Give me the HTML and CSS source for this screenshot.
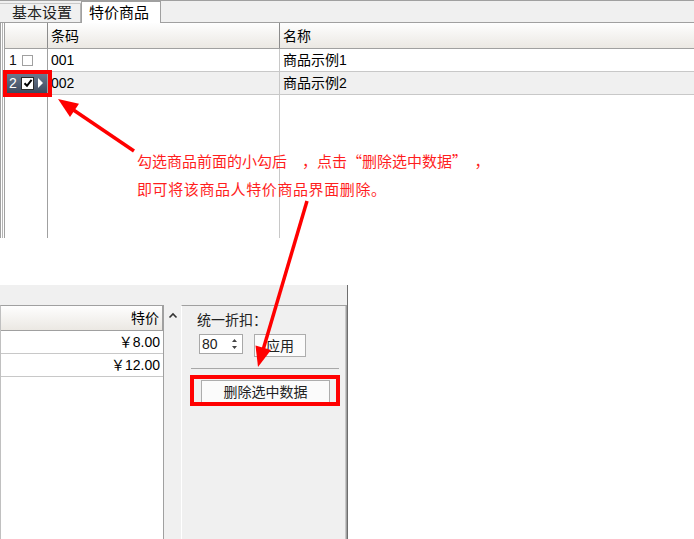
FILE: index.html
```html
<!DOCTYPE html>
<html lang="zh-CN">
<head>
    <meta charset="UTF-8">
    <meta name="viewport" content="width=device-width, initial-scale=1.0">
    <title>特价商品</title>
    <link rel="stylesheet" href="styles.css">
</head>
<body>
    <div class="page">
        <!-- upper screenshot: goods grid -->
        <div class="shot-top">
            <div class="tabs">
                <div class="tab">基本设置</div>
                <div class="tab tab-active">特价商品</div>
            </div>
            <div class="grid">
                <div class="row row-head">
                    <div class="cell rh"></div>
                    <div class="cell c1">条码</div>
                    <div class="cell c2">名称</div>
                </div>
                <div class="row">
                    <div class="cell rh"><span class="num">1</span><span class="cb"></span></div>
                    <div class="cell c1">001</div>
                    <div class="cell c2">商品示例1</div>
                </div>
                <div class="row row-sel">
                    <div class="cell rh rh-sel mark">
                        <span class="num">2</span>
                        <span class="cb cb-on">
                            <svg width="10" height="10" viewBox="0 0 10 10"><path d="M1.5 5.2 L4 7.8 L8.6 1.8" fill="none" stroke="#000" stroke-width="2"/></svg>
                        </span>
                        <span class="tri"></span>
                    </div>
                    <div class="cell c1">002</div>
                    <div class="cell c2">商品示例2</div>
                </div>
                <div class="row row-fill">
                    <div class="cell rh"></div>
                    <div class="cell c1"></div>
                    <div class="cell c2"></div>
                </div>
            </div>
        </div>

        <!-- lower screenshot: price grid and side panel -->
        <div class="shot-bottom">
            <div class="strip"></div>
            <div class="split">
                <div class="pgrid">
                    <div class="prow prow-head">特价</div>
                    <div class="prow">￥8.00</div>
                    <div class="prow">￥12.00</div>
                </div>
                <div class="vscroll">
                    <svg width="10" height="7" viewBox="0 0 10 7"><path d="M1.5 5.5 L5 2 L8.5 5.5" fill="none" stroke="#333" stroke-width="1.6"/></svg>
                </div>
                <div class="panel">
                    <div class="label">统一折扣：</div>
                    <div class="discount">
                        <div class="spin">
                            <span>80</span>
                            <svg width="7" height="14" viewBox="0 0 7 14"><path d="M1 5 L3.5 2 L6 5 Z M1 9 L3.5 12 L6 9 Z" fill="#444"/></svg>
                        </div>
                        <div class="btn btn-apply">应用</div>
                    </div>
                    <div class="sep"></div>
                    <div class="btn btn-del mark">删除选中数据</div>
                </div>
            </div>
        </div>

        <!-- annotations -->
        <div class="note">勾选商品前面的小勾后　，点击“删除选中数据”　，<br><span class="wide">即可将该商品人特价商品界面删除。</span></div>
        <svg class="arrows" width="694" height="539" viewBox="0 0 694 539">
            <line x1="134" y1="151" x2="72" y2="109" stroke="#f00" stroke-width="3.5"/>
            <polygon points="58,99 79,103.7 70,116.9" fill="#f00"/>
            <line x1="307" y1="201" x2="263" y2="350" stroke="#f00" stroke-width="3.5"/>
            <polygon points="258,367 271,350 255.5,345.5" fill="#f00"/>
        </svg>
    </div>
</body>
</html>
```

FILE: styles.css
```css
* {
    box-sizing: border-box;
}
body {
    margin: 0;
    background: #fff;
    color: #000;
    font-family: "Liberation Sans", "Noto Sans CJK SC", sans-serif;
    font-size: 14px;
}
.page {
    position: relative;
    width: 694px;
    height: 539px;
    overflow: hidden;
}

/* upper shot */
.shot-top {
    height: 238px;
    display: flex;
    flex-direction: column;
}
.tabs {
    height: 23px;
    display: flex;
    align-items: flex-end;
    background: #f0f0f0;
    border-top: 1px solid #a0a0a0;
    border-bottom: 1px solid #a0a0a0;
}
.tab {
    width: 81px;
    height: 19px;
    padding-left: 12px;
    display: flex;
    align-items: center;
    border-top: 1px solid #c8c8c8;
    border-right: 1px solid #b4b4b4;
    font-size: 15px;
    line-height: 18px;
    color: #222;
}
.tab-active {
    width: 80px;
    height: 22px;
    margin-bottom: -1px;
    padding-left: 7px;
    background: #fff;
    border: 1px solid #a0a0a0;
    border-bottom: 0;
    color: #000;
}
.grid {
    flex: 1;
    display: flex;
    flex-direction: column;
    padding-left: 5px;
    background: linear-gradient(to right, #a0a0a0 0 1px, #fff 1px 2px, #b4b4b4 2px 3px, #fff 3px 4px, #a0a0a0 4px 5px) left top / 5px 100% no-repeat, #fff;
}
.row {
    display: grid;
    grid-template-columns: 42px 232px 1fr;
    height: 23px;
    border-bottom: 1px solid #c8c8c8;
}
.row-head {
    height: 26px;
    border-bottom: 1px solid #a0a0a0;
    background: linear-gradient(#fefefe, #ebe8e3);
}
.row-fill {
    flex: 1;
    height: auto;
    border-bottom: 0;
}
.cell {
    display: flex;
    align-items: center;
    padding-left: 3px;
    white-space: nowrap;
    line-height: 18px;
    border-left: 1px solid #c8c8c8;
}
.cell.rh {
    border-left: 0;
}
.cell.c1 {
    border-left-color: #a0a0a0;
}
.row-head .cell {
    border-left-color: #8c8c8c;
}
.row-sel .c1,
.row-sel .c2 {
    background: #f0f0f0;
}
.num {
    width: 14px;
    padding-left: 1px;
    color: #111;
}
.cb {
    width: 11px;
    height: 11px;
    background: #fff;
    border: 1px solid #a0a0a0;
}
.rh-sel {
    background: linear-gradient(#6f7d93, #3a475b);
}
.rh-sel .num {
    color: #fff;
}
.cb-on {
    width: 13px;
    height: 13px;
    margin-left: -1px;
    border-color: #2a2a2a;
    display: flex;
    align-items: center;
    justify-content: center;
}
.tri {
    margin-left: 4px;
    width: 0;
    height: 0;
    border-left: 5px solid #fff;
    border-top: 5px solid transparent;
    border-bottom: 5px solid transparent;
}

/* red highlight boxes */
.mark {
    position: relative;
}
.mark::after {
    content: "";
    position: absolute;
    border: 4px solid #f00;
}
.rh-sel.mark::after {
    top: -2px;
    left: -2px;
    right: -5px;
    bottom: -3px;
}
.btn-del.mark::after {
    top: -6px;
    left: -12px;
    right: -11px;
    bottom: -3px;
}

/* lower shot */
.shot-bottom {
    margin-top: 47px;
    width: 348px;
    height: 254px;
    display: flex;
    flex-direction: column;
    background: #f0f0f0;
    border-right: 1px solid #6e6e6e;
}
.strip {
    height: 20px;
}
.split {
    flex: 1;
    display: flex;
}
.pgrid {
    width: 164px;
    background: #fff;
    border-top: 1px solid #a0a0a0;
    border-left: 1px solid #c0c0c0;
    border-right: 1px solid #a0a0a0;
}
.prow {
    height: 23px;
    display: flex;
    align-items: center;
    justify-content: flex-end;
    padding-right: 3px;
    line-height: 18px;
    border-bottom: 1px solid #c8c8c8;
}
.prow-head {
    height: 25px;
    border-bottom: 1px solid #a0a0a0;
    border-right: 1px solid #a0a0a0;
    background: linear-gradient(#fefefe, #ebe8e3);
}
.vscroll {
    width: 17px;
    padding-top: 7px;
    display: flex;
    justify-content: center;
    align-items: flex-start;
}
.panel {
    flex: 1;
    border-left: 1px solid #fff;
    border-top: 1px solid #a0a0a0;
    border-right: 1px solid #a0a0a0;
    box-shadow: inset -1px 0 #c8c8c8;
    color: #222;
}
.label {
    margin: 4px 0 0 15px;
    line-height: 20px;
}
.discount {
    display: flex;
    align-items: flex-start;
    margin: 4px 0 0 17px;
}
.spin {
    width: 44px;
    height: 20px;
    display: flex;
    align-items: center;
    justify-content: space-between;
    padding: 0 4px 0 2px;
    background: #fff;
    border: 1px solid #a8a8a8;
    line-height: 16px;
}
.btn {
    display: flex;
    align-items: center;
    justify-content: center;
    background: #fbfbfb;
    border: 1px solid #adadad;
    line-height: 18px;
}
.btn-apply {
    width: 52px;
    height: 23px;
    margin-left: 11px;
}
.sep {
    height: 1px;
    margin: 11px 7px 0 9px;
    background: #a8a8a8;
}
.btn-del {
    width: 129px;
    height: 24px;
    margin: 11px 0 0 19px;
}

/* annotation overlay */
.note {
    position: absolute;
    left: 137px;
    top: 147px;
    font-family: "Noto Sans CJK SC", sans-serif;
    font-size: 15px;
    line-height: 28px;
    color: #ff1e1e;
    white-space: nowrap;
}
.note .wide {
    letter-spacing: 0.6px;
}
.arrows {
    position: absolute;
    left: 0;
    top: 0;
    pointer-events: none;
}
```
